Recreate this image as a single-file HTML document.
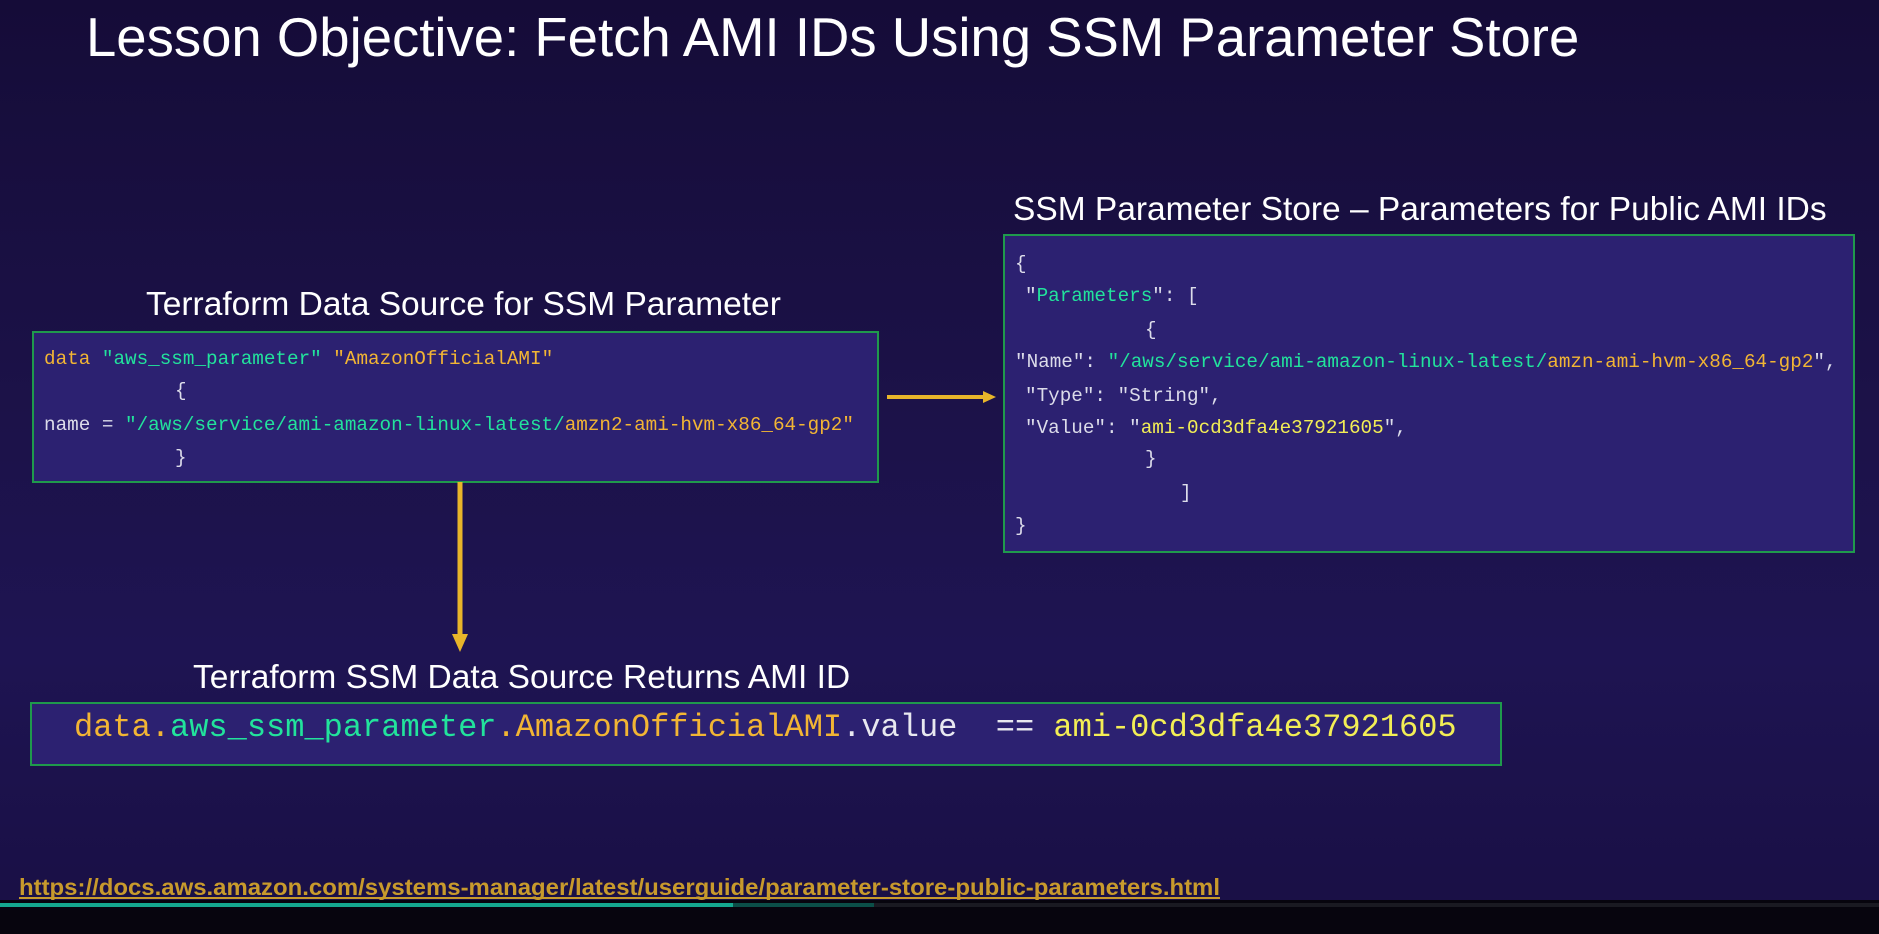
<!DOCTYPE html>
<html><head><meta charset="utf-8"><style>
*{margin:0;padding:0;box-sizing:border-box}
body{width:1879px;height:934px;overflow:hidden;background:linear-gradient(180deg,#150c38 0%,#1c1249 45%,#1e1452 70%,#190f44 100%);font-family:"Liberation Sans",sans-serif;color:#fff;position:relative}
.a{position:absolute;white-space:pre}
.h{font-size:33.5px;color:#fff}
.box{position:absolute;background:#2c2171;border:2px solid #1f9a4c}
.code{font-family:"Liberation Mono",monospace;font-size:19.3px;color:#dcdcea}
.y{color:#f2b534}.g{color:#22e39c}.w{color:#dcdcea}.b{color:#f3ee55}
</style></head><body>
<div class="a" style="left:86px;top:6px;font-size:54.5px;">Lesson Objective: Fetch AMI IDs Using SSM Parameter Store</div>

<div class="a h" style="left:146px;top:286px">Terraform Data Source for SSM Parameter</div>
<div class="box" style="left:32px;top:331px;width:847px;height:152px"></div>
<div class="a code" style="left:44px;top:348px"><span class="y">data</span> <span class="g">"aws_ssm_parameter"</span> <span class="y">"AmazonOfficialAMI"</span></div>
<div class="a code" style="left:175px;top:380px">{</div>
<div class="a code" style="left:44px;top:414px">name = <span class="g">"/aws/service/ami-amazon-linux-latest/</span><span class="y">amzn2-ami-hvm-x86_64-gp2"</span></div>
<div class="a code" style="left:175px;top:447px">}</div>

<div class="a h" style="left:1013px;top:191px">SSM Parameter Store – Parameters for Public AMI IDs</div>
<div class="box" style="left:1003px;top:234px;width:852px;height:319px"></div>
<div class="a code" style="left:1015px;top:253px">{</div>
<div class="a code" style="left:1025px;top:285px">"<span class="g">Parameters</span>": [</div>
<div class="a code" style="left:1145px;top:319px">{</div>
<div class="a code" style="left:1015px;top:351px">"Name": <span class="g">"/aws/service/ami-amazon-linux-latest/</span><span class="y">amzn-ami-hvm-x86_64-gp2</span>",</div>
<div class="a code" style="left:1025px;top:385px">"Type": "String",</div>
<div class="a code" style="left:1025px;top:417px">"Value": "<span class="b">ami-0cd3dfa4e37921605</span>",</div>
<div class="a code" style="left:1145px;top:448px">}</div>
<div class="a code" style="left:1180px;top:482px">]</div>
<div class="a code" style="left:1015px;top:515px">}</div>

<svg class="a" style="left:0;top:0" width="1879" height="934">
<line x1="887" y1="397" x2="985" y2="397" stroke="#e8b52a" stroke-width="4"/>
<polygon points="983,391 996,397 983,403" fill="#e8b52a"/>
<line x1="460" y1="482" x2="460" y2="636" stroke="#e8b52a" stroke-width="5"/>
<polygon points="452,634 460,652 468,634" fill="#e8b52a"/>
<text x="19" y="895" font-family="Liberation Sans Narrow, Liberation Sans, sans-serif" font-weight="bold" font-size="23" fill="#c89a2c" textLength="1201" lengthAdjust="spacingAndGlyphs">https://docs.aws.amazon.com/systems-manager/latest/userguide/parameter-store-public-parameters.html</text>
<rect x="19" y="897" width="1201" height="2" fill="#c89a2c"/>
</svg>

<div class="a h" style="left:193px;top:659px">Terraform SSM Data Source Returns AMI ID</div>
<div class="box" style="left:30px;top:702px;width:1472px;height:64px"></div>
<div class="a" style="left:74px;top:709px;font-family:'Liberation Mono',monospace;font-size:32px;color:#e8e8f0"><span class="y">data.</span><span class="g">aws_ssm_parameter</span><span class="y">.AmazonOfficialAMI</span>.value  == <span class="b">ami-0cd3dfa4e37921605</span></div>

<div class="a" style="left:0;top:900px;width:1879px;height:34px;background:#07050e"></div>
<div class="a" style="left:0;top:903px;width:1879px;height:4px;background:#1a1a22"></div>
<div class="a" style="left:0;top:903px;width:874px;height:4px;background:#0b4f48"></div>
<div class="a" style="left:0;top:903px;width:733px;height:4px;background:#14a98f"></div>
</body></html>
